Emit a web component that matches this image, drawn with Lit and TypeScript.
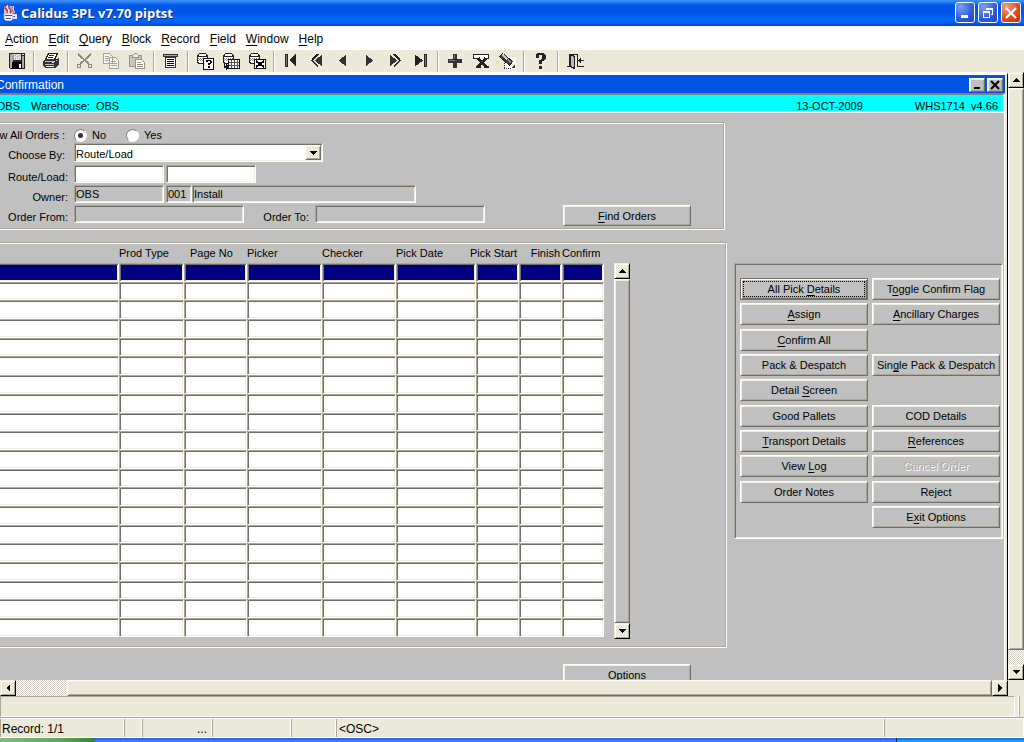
import { LitElement, html, css, svg, nothing } from "lit";
import { customElement, property } from "lit/decorators.js";
import { classMap } from "lit/directives/class-map.js";

/** Turns "All Pick _Details" into text with the accelerator letter underlined. */
const mnemonic = (text: string) => {
  const at = text.indexOf("_");
  if (at < 0) return html`${text}`;
  return html`${text.slice(0, at)}<u>${text[at + 1]}</u>${text.slice(at + 2)}`;
};

const database = svg`
  <path fill="#fff" stroke="#222" d="M1.500 3.500l2-2h6l2 2v7l-2 1h-6l-2-1z"/>
  <path stroke="#222" fill="none" d="M1.500 3.500l2 1h6l2-1"/>
  <path stroke="#888" fill="none" stroke-dasharray="1 1" d="M2 6.500h9M3 7.500h8M2 8.500h9"/>`;

const icons: Record<string, unknown> = {
  save: svg`<path fill="#222" d="M1 1h16v16h-15l-1-1z"/><path fill="#aaa" d="M2 2h3v14h-3zM14 4h2v12h-2z"/>
    <path fill="#ddd" d="M5 2h8v6h-8z"/><path fill="#999" d="M5 3h1v5h-1zM7 3h1v1h-1zM9 4h1v1h-1zM11 3h1v1h-1zM7 6h1v1h-1zM11 6h1v1h-1z"/>
    <path fill="#000" d="M4 10h10v7h-10z"/><path fill="#fff" d="M11 12h2v4h-2zM14 2h2v1h-2z"/>`,
  print: svg`<path fill="#fff" stroke="#222" d="M6.500 1.500h9l-3 6h-9z"/><path stroke="#222" d="M7 3.500h5M6 5.500h5"/>
    <path fill="#333" d="M3 7h12l2-2v7l-4 4h-10l-2-2v-5z"/><path fill="#bbb" d="M3 9h10v1h-10zM3 12h9v1h-9zM14 8h1v1h-1z"/><path fill="#eee" d="M4 14h8v1h-8zM10 10h2v1h-2z"/>`,
  cut: svg`<path stroke="#8d8b82" stroke-width="2" fill="none" d="M2 2l11 10M15 2l-11 10"/>
    <path stroke="#8d8b82" stroke-width="1" fill="none" d="M1.500 12.500h3v3h-3zM12.500 12.500h3v3h-3z"/><path stroke="#fff" fill="none" d="M3 5l4 4M15 5l-4 4"/>`,
  copy: svg`<path fill="#f5f4ee" stroke="#a3a197" d="M1.500 1.500h6l3 3v7h-9zM7.500 5.500h6l3 3v8h-9z"/>
    <path stroke="#a3a197" d="M3 4.500h4M3 6.500h4M3 8.500h4M9 9.500h5M9 11.500h6M9 13.500h6"/>`,
  paste: svg`<path fill="#c9c7bb" stroke="#96948a" d="M1.500 3.500h12v11h-12z"/><path fill="#eee" stroke="#96948a" d="M4.500 3.500l2-2h2l2 2v2h-6z"/>
    <path fill="#fff" stroke="#96948a" d="M7.500 7.500h6l3 3v6h-9z"/><path stroke="#96948a" d="M9 10.500h4M9 12.500h6M9 14.500h6"/>`,
  form: svg`<path fill="#333" d="M1 2h15v3h-15z"/><path fill="#aaa" d="M2 3h13v1h-13z"/><path fill="#fff" stroke="#333" d="M3.500 5.500h10v10h-10z"/>
    <path stroke="#000" d="M5 7.500h7M5 9.500h7M5 11.500h7M5 13.500h7"/>`,
  enterQuery: svg`${database}<path fill="#fff" stroke="#111" d="M7.500 6.500h10v11h-10z"/>
    <path fill="#000" d="M10 8h5v1h-5zM10 9h2v1h-2zM14 9h2v2h-2zM12 11h3v1h-3zM12 12h2v1h-2zM12 14h2v2h-2z"/>`,
  runQuery: svg`${database}<path fill="#fff" stroke="#111" d="M6.500 7.500h11v9h-11z"/><path stroke="#555" d="M7 10.500h10M7 13.500h10M9.500 8v8M12.500 8v8M15.500 8v8"/>
    <path fill="#111" d="M2 11h1v3h1v-2l3 3-3 3v-2h-2z"/>`,
  cancelQuery: svg`${database}<path fill="#fff" stroke="#111" d="M6.500 7.500h11v9h-11z"/><path stroke="#000" stroke-width="2" d="M8 9l8 6M16 9l-8 6"/>`,
  first: svg`<path fill="#222" d="M3 2h3v13h-3zM7 8l7-6v13z"/><path fill="#777" d="M4 3h1v11h-1z"/>`,
  prevSet: svg`<path stroke="#222" fill="none" stroke-width="2" d="M10 2l-6 6.500 6 6"/><path fill="#333" d="M7 8.500l7-6v12z"/>`,
  prev: svg`<path fill="#333" d="M5 8.500l7-6v12z"/>`,
  next: svg`<path fill="#333" d="M13 8.500l-7-6v12z"/>`,
  nextSet: svg`<path stroke="#222" fill="none" stroke-width="2" d="M8 2l6 6.500-6 6"/><path fill="#333" d="M11 8.500l-7-6v12z"/>`,
  last: svg`<path fill="#222" d="M12 2h3v13h-3zM11 8.500l-8-6v12z"/><path fill="#777" d="M13 3h1v11h-1z"/>`,
  insert: svg`<path fill="#333" d="M7 2h4v5h5v4h-5v5h-4v-5h-5v-4h5z"/><path fill="#777" d="M8 3h1v5h-6v1h6z"/>`,
  remove: svg`<path fill="#fff" stroke="#222" d="M1.500 2.500h15v4h-15z"/><path stroke="#ece9d8" d="M5 6.500h9"/>
    <path stroke="#222" stroke-width="3" d="M6 6l8 9M14 6l-8 9"/><path fill="#222" d="M4 14h5v2h-5zM12 14h5v2h-5z"/>`,
  clear: svg`<path fill="#fff" d="M7 5h11v12h-11z"/><path stroke="#333" stroke-dasharray="1 1" d="M6.500 7v10M6 16.500h7"/>
    <path fill="#444" stroke="#222" d="M1.500 4.500l3-3 10 8-3 4z"/><path fill="#ccc" d="M3 3l2-1 5 4-2 2z"/><path fill="#999" d="M9 8l1-1 3 3-1 1z"/><path fill="#333" d="M13 16l4-4v4z"/>`,
  help: svg`<path fill="#222" d="M5 1h7v1h1v1h1v4h-1v1h-1v1h-2v3h-3v-4h2v-1h1v-4h-3v3h-3v-4h1zM7 14h3v3h-3z"/>`,
  exit: svg`<path stroke="#222" fill="none" d="M1 14.500h3M3.500 15v-13h8v12h6"/><path fill="#bbb" stroke="#222" d="M4.500 2.500l4 2v12l-4-2z"/>
    <path stroke="#333" d="M13 8.500h5"/><path fill="#222" d="M12 8.500l3-3v6z"/>`,
};

const bevels = css`
  .raised {
    border: 1px solid;
    border-color: #fff #716f64 #716f64 #fff;
    box-shadow: inset 1px 1px #f1efe2, inset -1px -1px #aca899;
  }
  .sunken {
    border: 1px solid;
    border-color: #aca899 #fff #fff #aca899;
    box-shadow: inset 1px 1px #716f64, inset -1px -1px #f1efe2;
  }
`;

const base = css`
  *, *::before, *::after { box-sizing: border-box; }
  button, input, select { font: inherit; color: inherit; margin: 0; padding: 0; border-radius: 0; outline: none; }
  u { text-underline-offset: 2px; text-decoration-thickness: 1px; }
`;

@customElement("scroll-bar")
export class ScrollBar extends LitElement {
  @property({ type: Boolean, reflect: true }) horizontal = false;
  @property({ type: Boolean, reflect: true }) gray = false;
  @property({ type: Number }) before = 0;
  @property({ type: Number }) after = 0;

  static styles = [base, bevels, css`
    :host { display: flex; flex-direction: column; flex: none; width: 16px; --face: #ece9d8; }
    :host([horizontal]) { flex-direction: row; width: auto; height: 16px; }
    :host([gray]) { --face: #c0c0c0; }
    .arrow {
      flex: none; width: 16px; height: 16px; background: #ece9d8;
      display: grid; place-items: center;
      border: 1px solid; border-color: #f1efe2 #000 #000 #f1efe2;
      box-shadow: inset 1px 1px #fff, inset -1px -1px #aca899;
    }
    .thumb { flex: 1; min-width: 0; min-height: 0; background: var(--face); }
    .track { flex: none; background: repeating-conic-gradient(#fff 0 25%, #d4d0c8 0 50%) 0 0 / 2px 2px; }
  `];

  private arrow(label: string, d: string) {
    return html`<button class="arrow" aria-label=${label}>
      <svg width="8" height="8" shape-rendering="crispEdges"><path d=${d} /></svg>
    </button>`;
  }

  render() {
    const side = this.horizontal ? "width" : "height";
    return html`
      ${this.horizontal ? this.arrow("Scroll left", "M6 0v8l-4-4z") : this.arrow("Scroll up", "M0 6h8l-4-4z")}
      ${this.before ? html`<div class="track" style="${side}:${this.before}px"></div>` : nothing}
      <div class="thumb raised"></div>
      ${this.after ? html`<div class="track" style="${side}:${this.after}px"></div>` : nothing}
      ${this.horizontal ? this.arrow("Scroll right", "M2 0v8l4-4z") : this.arrow("Scroll down", "M0 2h8l-4 4z")}
    `;
  }
}

@customElement("app-root")
export class AppRoot extends LitElement {
  private menus = ["_Action", "_Edit", "_Query", "_Block", "_Record", "_Field", "_Window", "_Help"];

  private tools: [string, string][][] = [
    [["save", "Save"]],
    [["print", "Print"]],
    [["cut", "Cut"], ["copy", "Copy"], ["paste", "Paste"]],
    [["form", "List"]],
    [["enterQuery", "Enter query"], ["runQuery", "Execute query"], ["cancelQuery", "Cancel query"]],
    [["first", "First"], ["prevSet", "Previous block"], ["prev", "Previous"], ["next", "Next"], ["nextSet", "Next block"], ["last", "Last"]],
    [["insert", "Insert record"], ["remove", "Remove record"], ["clear", "Clear record"]],
    [["help", "Help"]],
    [["exit", "Exit"]],
  ];

  private columns: { title: string; width: number; place?: string }[] = [
    { title: "", width: 119 },
    { title: "Prod Type", width: 65 },
    { title: "Page No", width: 63, place: "indent" },
    { title: "Picker", width: 75 },
    { title: "Checker", width: 74 },
    { title: "Pick Date", width: 80 },
    { title: "Pick Start", width: 43, place: "end" },
    { title: "Finish", width: 43, place: "end" },
    { title: "Confirm", width: 42 },
  ];

  private actions: (string | null)[] = [
    "All Pick _Details", "T_oggle Confirm Flag",
    "_Assign", "_Ancillary Charges",
    "_Confirm All", null,
    "Pack & Despatch", "Sin_gle Pack & Despatch",
    "Detail _Screen", null,
    "Good Pallets", "COD Details",
    "_Transport Details", "_References",
    "View _Log", "Cancel Order",
    "Order Notes", "Re_ject",
    null, "E_xit Options",
  ];

  static styles = [base, bevels, css`
    :host {
      display: flex; flex-direction: column; height: 100vh; overflow: hidden;
      background: #ece9d8; color: #000;
      font: 11px/14px "Liberation Sans", Arial, sans-serif;
    }

    .titlebar {
      flex: none; display: flex; align-items: center; gap: 3px; height: 26px; padding: 0 3px 1px 2px;
      background: linear-gradient(#3d95ff 0, #2a80f5 2px, #0058e6 5px, #0054e3 12px, #0066ff 19px, #0064fa 22px, #0046c8 26px);
    }
    .titlebar h1 {
      flex: 1; margin: 0; color: #fff; font: bold 13px/18px "Open Sans", sans-serif;
      text-shadow: 1px 1px #0a2f8a;
    }
    .caption { display: flex; gap: 3px; }
    .caption button {
      width: 20px; height: 21px; border: 1px solid #fff; border-radius: 3px;
      display: grid; place-items: center;
      background: radial-gradient(circle at 25% 20%, #7d9ff5, #2c5be0 60%, #1d45c8);
    }
    .caption .close { background: radial-gradient(circle at 25% 20%, #f0a088, #dc4a20 60%, #c03208); }

    .menubar {
      flex: none; display: flex; align-items: center; gap: 10px; height: 24px; padding: 2px 5px 0;
      background: #fff; font-size: 12px;
    }
    .menubar button { border: 0; background: none; }

    .toolbar { flex: none; display: flex; height: 22px; padding-left: 4px; }
    .tools { display: flex; }
    .tools + .tools::before {
      content: ""; width: 2px; margin: 1px 3px 0; background: linear-gradient(90deg, #aca899 50%, #fff 50%);
    }
    .tools button { width: 26px; height: 22px; border: 0; background: none; display: grid; place-items: center; }

    .workspace { flex: 1; min-height: 0; display: flex; }
    .window {
      flex: 1; min-width: 0; display: flex; flex-direction: column;
      background: #c0c0c0; border-top: 3px solid #fff; border-right: 1px solid #000;
      box-shadow: inset -2px 0 #ece9d8;
    }
    .window-title {
      flex: none; display: flex; align-items: center; height: 18px; margin-right: 2px; padding: 1px 2px 0 0;
      background: #0054e3; color: #fff; font-size: 12px; gap: 2px;
    }
    .clip { display: flex; justify-content: flex-end; overflow: hidden; white-space: nowrap; }
    .window-title .clip { width: 64px; margin-right: auto; }
    .window-title button {
      width: 16px; height: 14px; background: #c0c0c0; display: grid; place-items: center;
    }
    .context {
      flex: none; display: flex; align-items: flex-end; height: 20px; margin-right: 2px; padding-right: 5px;
      line-height: 10px;
      background: #0ff; border: solid; border-width: 2px 2px 2px 0; border-color: #808080 #fff #fff;
    }
    .context .clip { width: 20px; margin-right: 11px; overflow: clip; overflow-clip-margin: 3px; }
    .context .place { margin-right: 6px; }
    .context time { margin-left: auto; }
    .context .version { margin-left: 52px; white-space: pre; }

    .canvas {
      flex: 1; min-height: 0; overflow: hidden; display: flex; align-items: flex-start; gap: 8px;
      padding-top: 9px; margin-right: 2px; border-right: 1px solid #fff;
    }
    .main { flex: none; display: flex; flex-direction: column; width: 726px; }
    .etched {
      border: solid #aca899; border-width: 1px 1px 1px 0;
      box-shadow: 0 1px #fff, 1px 1px #fff, inset 0 1px #fff;
    }

    .criteria { margin: 0 2px 0 0; padding: 1px 0 2px; }
    .row { display: flex; align-items: flex-start; min-height: 20px; }
    .row.choose { min-height: 22px; }
    .row > .label {
      width: 68px; margin-right: 6px; padding-top: 5px;
      display: flex; justify-content: flex-end; overflow: hidden; white-space: nowrap;
    }
    .row > .near { padding-right: 3px; }
    .row > .mid { width: 65px; }
    .radios { min-height: 19px; }
    .radios > .label { padding-top: 4px; }
    .radios .option { display: flex; align-items: center; gap: 5px; padding-top: 4px; width: 52px; }
    .radios input {
      appearance: none; width: 13px; height: 13px; border-radius: 50%; background: #fff;
      border: 1px solid; border-color: #808080 #fff #fff #808080;
      display: grid; place-items: center;
    }
    .radios input:checked::before { content: ""; width: 5px; height: 5px; border-radius: 50%; background: #333; }

    .field { height: 18px; padding: 0 1px; background: #fff; margin-right: 2px; min-width: 0; }
    .field[readonly] { background: #c0c0c0; }
    .half { width: 90px; }
    .code { width: 26px; margin-right: 0; }
    .name { width: 224px; }
    .order { width: 170px; margin-right: 0; }
    .combo { display: grid; width: 249px; height: 19px; background: #fff; }
    .combo select, .combo span { grid-area: 1 / 1; }
    .combo select { appearance: none; border: 0; background: none; padding: 2px 1px 0; }
    .combo span {
      justify-self: end; align-self: center; width: 16px; height: 15px; margin-right: 1px;
      background: #ece9d8; display: grid; place-items: center; pointer-events: none;
    }

    .button {
      width: 128px; height: 22px; background: #c0c0c0; text-align: center; white-space: nowrap;
    }
    .find { margin-left: 78px; height: 21px; }
    .options { align-self: flex-end; margin: 17px 35px 0 0; }

    .results { display: flex; align-items: flex-start; gap: 10px; margin-top: 13px; padding-bottom: 7px; }
    table { table-layout: fixed; width: 604px; height: 394px; border-spacing: 0; }
    thead tr { height: 20px; }
    th { padding: 0; font-weight: normal; text-align: left; white-space: nowrap; }
    th.indent { padding-left: 6px; }
    th.end div { display: flex; justify-content: flex-end; padding-right: 2px; }
    td { padding: 0; background: #fff; }
    td:first-child { border-left: 0; box-shadow: inset 0 1px #716f64, inset -1px -1px #f1efe2; }
    tr.current td { background: #000080; }
    .results scroll-bar { margin-top: 20px; height: 376px; }

    .actions {
      flex: none; margin-top: 141px; padding: 14px 2px 10px 5px;
    }
    .action-grid {
      display: grid; grid-template-columns: 128px 128px; grid-auto-rows: 22px; column-gap: 4px;
      height: 250px; align-content: space-between;
    }
    .button.default { border-color: #716f64; box-shadow: inset 1px 1px #fff, inset -1px -1px #716f64, inset -2px -2px #aca899; padding: 2px; }
    .button.default span { display: block; border: 1px dotted #000; line-height: 14px; }
    .button:disabled { color: #aca899; text-shadow: 1px 1px #fff; }

    .bottom-scroll { flex: none; display: flex; }
    .bottom-scroll scroll-bar { flex: 1; margin-right: 16px; }

    .console { flex: none; display: flex; gap: 3px; height: 21px; padding-right: 4px; }
    .console .message { flex: 1; border: 1px solid; border-color: #aca899 #fff #fff #aca899; }
    .console .grip { width: 2px; background: linear-gradient(90deg, #fff 50%, #aca899 50%); }
    .status {
      flex: none; display: flex; height: 21px; font-size: 12px; line-height: 20px;
      border-top: 1px solid #aca899; border-bottom: 1px solid #fff; box-shadow: inset 0 1px #fff;
    }
    .status span { flex: none; border-right: 1px solid #fff; border-left: 1px solid #aca899; padding: 0 2px; margin-top: 1px; }
    .status .record { width: 124px; padding-left: 1px; }
    .status .mode { width: 18px; }
    .status .list { width: 70px; text-align: right; padding-right: 4px; }
    .status .wide { width: 79px; }
    .status .short { width: 45px; }
    .status .flag { flex: 1; }
    .status .last { width: 140px; }
    .taskbar {
      flex: none; display: flex; height: 4px;
      background: linear-gradient(#245edb, #3f8cf3);
    }
    .taskbar .start { width: 95px; border-radius: 0 4px 0 0; background: linear-gradient(90deg, #7fbd7f, #5fa85f 60%, #2f8a2f); }
    .taskbar .tray { width: 128px; margin-left: auto; border-left: 1px solid #092e51; background: linear-gradient(#0c6fd8, #18b0f5); }
  `];

  render() {
    return html`
      <header class="titlebar">
        <svg width="16" height="18" viewBox="0 0 16 18">
          <path fill="#fff" stroke="#8a8fc0" d="M2 9h9v6l-2 2H4l-2-2z" />
          <path fill="none" stroke="#e8e8ff" stroke-width="2" d="M11 11h3v3h-3" />
          <path fill="#f4f0f8" d="M2 2h10v7H2z" opacity=".7" />
          <path fill="none" stroke="#e02828" stroke-width="1.500" d="M4 2c-4 3 4 3 1 7M8 1c-4 4 4 4 0 8M11 3c-2 2 2 2 0 5" />
          <path fill="none" stroke="#fff" d="M6 1c-4 3 3 4 0 8M12 3c-3 3 2 4 0 6" />
          <path stroke="#4a4a9a" d="M3 11.500h7M4 14.500h5M1 17.500h13" />
        </svg>
        <h1>Calidus 3PL v7.70 piptst</h1>
        <div class="caption">
          <button aria-label="Minimize"><svg width="14" height="14"><path fill="#fff" d="M3 9h7v3H3z" /></svg></button>
          <button aria-label="Restore"><svg width="14" height="14" fill="none" stroke="#fff" shape-rendering="crispEdges">
            <path d="M2.500 5.500h6v6h-6zM2 6.500h7M5.500 3v-.5h6v6H10M5 3.500h7" /></svg></button>
          <button class="close" aria-label="Close"><svg width="14" height="14"><path stroke="#fff" stroke-width="2" d="M2 2l10 10M12 2L2 12" /></svg></button>
        </div>
      </header>

      <nav class="menubar">${this.menus.map((m) => html`<button>${mnemonic(m)}</button>`)}</nav>

      <div class="toolbar" role="toolbar">
        ${this.tools.map((group) => html`<div class="tools">
          ${group.map(([name, label]) => html`<button aria-label=${label}>
            <svg width="18" height="18" fill="none" shape-rendering="crispEdges">${icons[name]}</svg>
          </button>`)}
        </div>`)}
      </div>

      <div class="workspace">
        <section class="window">
          <div class="window-title">
            <div class="clip"><span>Confirmation</span></div>
            <button class="raised" aria-label="Minimize window"><svg width="10" height="10"><path d="M2 7h6v2H2z" /></svg></button>
            <button class="raised" aria-label="Close window"><svg width="10" height="10"><path stroke="#000" stroke-width="2" d="M1 1l8 8M9 1L1 9" /></svg></button>
          </div>
          <div class="context">
            <div class="clip"><span>OBS</span></div>
            <span class="place">Warehouse:</span><span>OBS</span>
            <time datetime="2009-10-13">13-OCT-2009</time>
            <span class="version">WHS1714  v4.66</span>
          </div>
          <div class="canvas">
            <div class="main">
              ${this.renderCriteria()}
              ${this.renderResults()}
              <button class="button raised options">Options</button>
            </div>
            <div class="actions sunken">
              <div class="action-grid">${this.actions.map((a, i) => this.renderAction(a, i))}</div>
            </div>
          </div>
        </section>
        <scroll-bar .after=${14}></scroll-bar>
      </div>
      <div class="bottom-scroll"><scroll-bar horizontal .before=${51}></scroll-bar></div>

      <div class="console"><div class="message"></div><div class="grip"></div></div>
      <footer class="status">
        <span class="record">Record: 1/1</span><span class="mode"></span><span class="list">...</span>
        <span class="wide"></span><span class="short"></span><span class="flag">&lt;OSC&gt;</span><span class="last"></span>
      </footer>
      <div class="taskbar"><div class="start"></div><div class="tray"></div></div>
    `;
  }

  private renderCriteria() {
    return html`<form class="criteria etched" @submit=${(e: Event) => e.preventDefault()}>
      <div class="row radios" role="radiogroup" aria-labelledby="all-orders">
        <span class="label near" id="all-orders">Show All Orders :</span>
        <label class="option"><input type="radio" name="all" checked />No</label>
        <label class="option"><input type="radio" name="all" />Yes</label>
      </div>
      <div class="row choose">
        <label class="label near" for="choose">Choose By:</label>
        <div class="combo sunken">
          <select id="choose"><option>Route/Load</option></select>
          <span class="raised"><svg width="8" height="6" shape-rendering="crispEdges"><path d="M0 1h8l-4 4z" /></svg></span>
        </div>
      </div>
      <div class="row">
        <label class="label" for="route">Route/Load:</label>
        <input class="field sunken half" id="route" /><input class="field sunken half" aria-label="Load" />
      </div>
      <div class="row">
        <label class="label" for="owner">Owner:</label>
        <input class="field sunken half" id="owner" readonly value="OBS" />
        <input class="field sunken code" aria-label="Owner code" readonly value="001" />
        <input class="field sunken name" aria-label="Owner name" readonly value="Install" />
      </div>
      <div class="row">
        <label class="label" for="from">Order From:</label>
        <input class="field sunken order" id="from" readonly />
        <label class="label mid" for="to">Order To:</label>
        <input class="field sunken order" id="to" readonly />
        <button class="button raised find">${mnemonic("_Find Orders")}</button>
      </div>
    </form>`;
  }

  private renderResults() {
    return html`<div class="results etched">
      <table>
        <colgroup>${this.columns.map((c) => html`<col style="width:${c.width}px" />`)}</colgroup>
        <thead><tr>${this.columns.map((c) => html`<th class=${c.place ?? ""}><div>${c.title}</div></th>`)}</tr></thead>
        <tbody>
          ${Array.from({ length: 20 }, (_, row) => html`<tr class=${classMap({ current: row === 0 })}>
            ${this.columns.map(() => html`<td class="sunken"></td>`)}
          </tr>`)}
        </tbody>
      </table>
      <scroll-bar gray></scroll-bar>
    </div>`;
  }

  private renderAction(label: string | null, index: number) {
    if (label === null) return html`<span></span>`;
    return html`<button class=${classMap({ button: true, raised: true, default: index === 0 })}
      ?disabled=${label === "Cancel Order"}><span>${mnemonic(label)}</span></button>`;
  }
}
